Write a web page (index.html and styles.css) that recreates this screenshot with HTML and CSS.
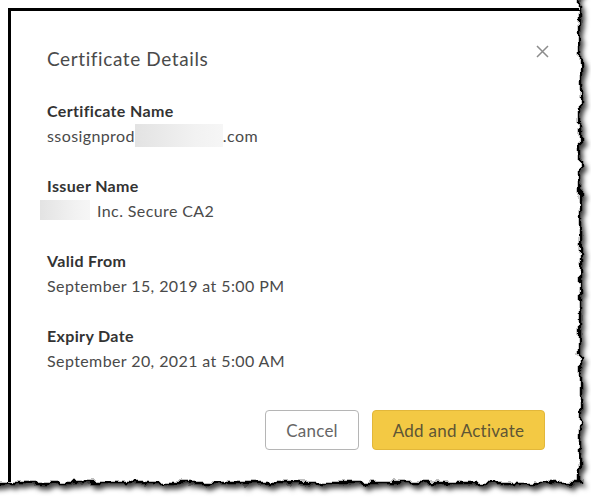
FILE: index.html
```html
<!DOCTYPE html>
<html lang="en">
<head>
<meta charset="utf-8">
<title>Certificate Details</title>
<link rel="stylesheet" href="styles.css">
</head>
<body>
<div class="stage">
  <svg class="frame" width="591" height="497" viewBox="0 0 591 497" aria-hidden="true">
    <defs>
      <filter id="torn" x="-60" y="-60" width="720" height="620" filterUnits="userSpaceOnUse">
        <feTurbulence type="fractalNoise" baseFrequency="0.08" numOctaves="3" seed="7" result="noise"/>
        <feDisplacementMap in="SourceGraphic" in2="noise" scale="10" xChannelSelector="R" yChannelSelector="G" result="torn"/>
        <feGaussianBlur in="torn" stdDeviation="2.6" result="blur"/>
        <feOffset in="blur" dx="3" dy="4" result="off"/>
        <feFlood flood-color="#000" flood-opacity="0.75"/>
        <feComposite in2="off" operator="in" result="shadow"/>
        <feMerge>
          <feMergeNode in="shadow"/>
          <feMergeNode in="torn"/>
        </feMerge>
      </filter>
    </defs>
    <path d="M -30 -30 H 580 V 483 H -30 Z" fill="#fff" stroke="#000" stroke-width="2.4" filter="url(#torn)"/>
    <line x1="8" y1="9.5" x2="579" y2="9.5" stroke="#000" stroke-width="3"/>
    <line x1="9.5" y1="8" x2="9.5" y2="482" stroke="#000" stroke-width="3"/>
  </svg>

  <div class="dialog">
    <div class="header">
      <h2 class="title">Certificate Details</h2>
      <button class="close" aria-label="Close">
        <svg width="13" height="13" viewBox="0 0 13 13"><path d="M1 1 L12 12 M12 1 L1 12" stroke="#8c8c8c" stroke-width="1.5" fill="none"/></svg>
      </button>
    </div>

    <div class="fields">
      <div class="field">
        <div class="label">Certificate Name</div>
        <div class="value">ssosignprod<span class="redact redact-a"></span>.com</div>
      </div>
      <div class="field">
        <div class="label">Issuer Name</div>
        <div class="value"><span class="redact redact-b"></span>Inc. Secure CA2</div>
      </div>
      <div class="field">
        <div class="label">Valid From</div>
        <div class="value">September 15, 2019 at 5:00 PM</div>
      </div>
      <div class="field">
        <div class="label">Expiry Date</div>
        <div class="value">September 20, 2021 at 5:00 AM</div>
      </div>
    </div>

    <div class="footer">
      <button class="btn btn-cancel">Cancel</button>
      <button class="btn btn-primary">Add and Activate</button>
    </div>
  </div>
</div>
</body>
</html>
```

FILE: styles.css
```css
html, body {
  margin: 0;
  padding: 0;
  background: #fff;
}

.stage {
  position: relative;
  width: 591px;
  height: 497px;
  overflow: hidden;
  font-family: Lato, "Open Sans", sans-serif;
}

.frame {
  position: absolute;
  left: 0;
  top: 0;
  z-index: 0;
}

.dialog {
  position: relative;
  z-index: 1;
  box-sizing: border-box;
  width: 575px;
  height: 478px;
  margin: 8px 0 0 8px;
  padding: 39px 38px 0 39px;
  display: flex;
  flex-direction: column;
}

.header {
  display: flex;
  justify-content: space-between;
  align-items: flex-start;
}

.title {
  margin: 0;
  font-size: 19px;
  line-height: 24px;
  font-weight: 400;
  letter-spacing: 0.6px;
  color: #4a4a4a;
}

.close {
  margin: -2px -4px 0 0;
  padding: 0;
  border: 0;
  background: none;
  width: 13px;
  height: 13px;
  display: flex;
}

.fields {
  margin-top: 27px;
  display: flex;
  flex-direction: column;
  gap: 25px;
}

.label {
  font-size: 16px;
  line-height: 25px;
  font-weight: 700;
  letter-spacing: 0.35px;
  color: #333;
}

.value {
  font-size: 16px;
  line-height: 25px;
  letter-spacing: 0.4px;
  color: #4a4a4a;
  white-space: nowrap;
}

.redact {
  display: inline-block;
  vertical-align: top;
  background: linear-gradient(90deg, #e3e3e3, #f2f2f2 70%, #f6f6f6);
}

.redact-a {
  width: 88px;
  height: 23px;
  margin-top: 0.5px;
}

.redact-b {
  width: 50px;
  height: 20px;
  margin: 1.5px 7px 0 -7px;
}

.footer {
  margin-top: 37px;
  display: flex;
  justify-content: flex-end;
  gap: 13px;
}

.btn {
  box-sizing: border-box;
  height: 40px;
  border-radius: 4px;
  font-family: Lato, "Open Sans", sans-serif;
  font-size: 17px;
  letter-spacing: 0.25px;
  padding: 0;
  cursor: pointer;
}

.btn-cancel {
  width: 94px;
  background: #fff;
  border: 1px solid #b5b5b5;
  color: #666;
}

.btn-primary {
  width: 173px;
  background: #f3c944;
  border: 1px solid #e2b73a;
  color: #5e5535;
}
```
